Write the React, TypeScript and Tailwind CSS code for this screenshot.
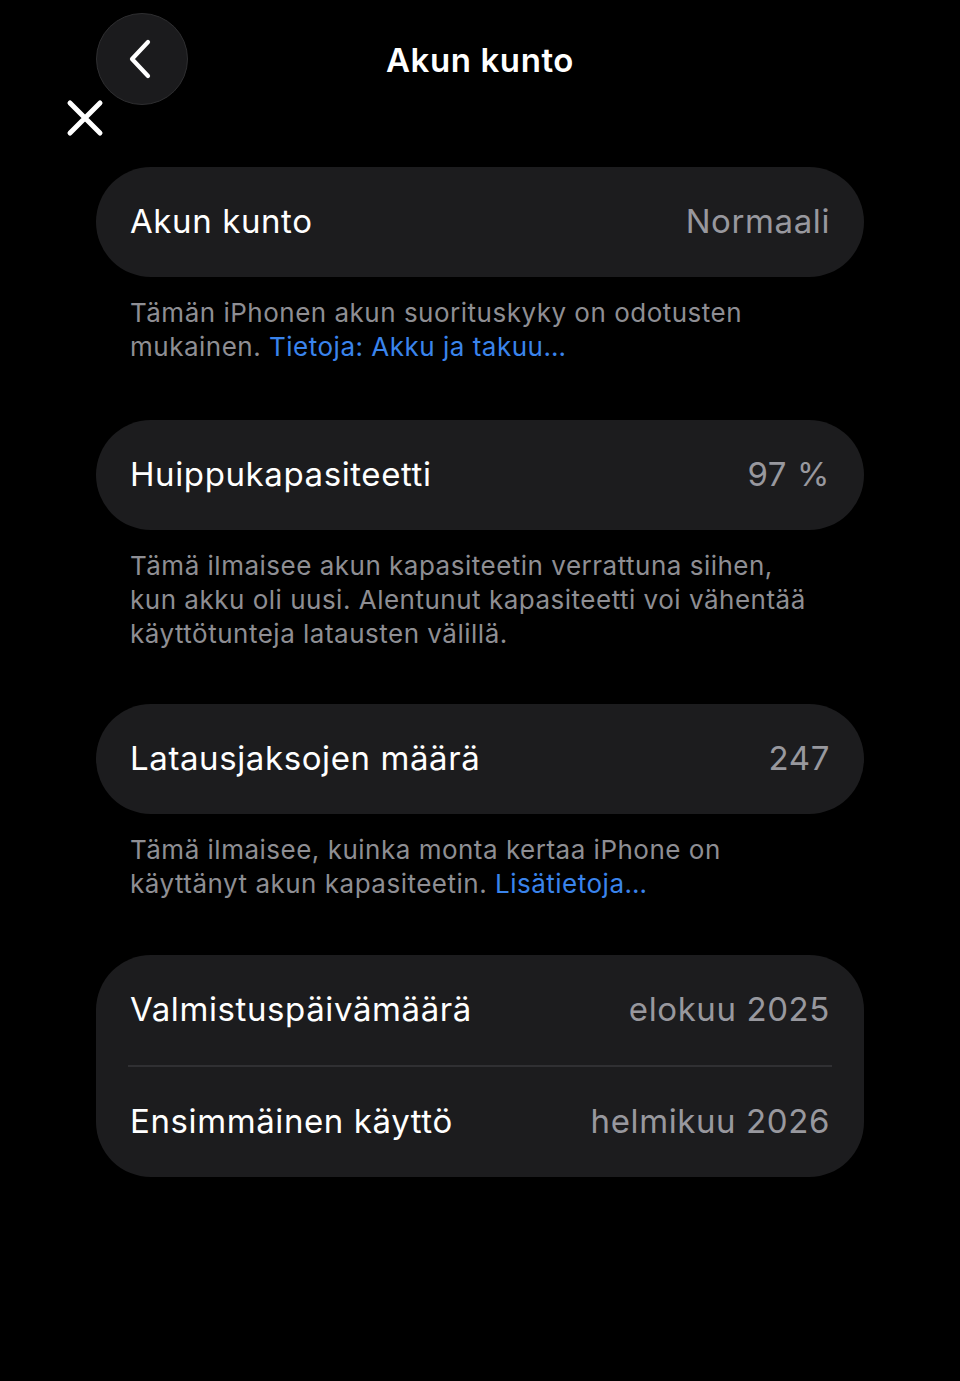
import React from "react";

const font = { fontFamily: "Inter, 'Noto Sans', 'Liberation Sans', sans-serif" };

function Row({ label, value }: { label: string; value: string }) {
  return (
    <div className="flex h-[110px] items-center justify-between px-[34px]">
      <span className="text-[33px] text-white tracking-[0.6px]">{label}</span>
      <span className="text-[33px] text-[#98989e] tracking-[0.6px]">{value}</span>
    </div>
  );
}

function Note({ children }: { children: React.ReactNode }) {
  return (
    <p className="pl-[34px] pr-[48px] pt-[19px] text-[26px] leading-[34px] tracking-[0.5px] text-[#8e8e93]">
      {children}
    </p>
  );
}

export default function App() {
  return (
    <div className="min-h-[1381px] w-[960px] bg-black" style={font}>
      {/* top bar */}
      <div className="grid grid-cols-[1fr_auto_1fr] items-center pt-[13px]">
        <div className="pl-[96px]">
          <button className="flex h-[92px] w-[92px] items-center justify-center rounded-full border border-[#2e2e30] bg-[#1b1b1d]">
            <svg width="32" height="42" viewBox="0 0 32 42" fill="none" className="-ml-[4px]">
              <path d="M24 4 L8 21 L24 38" stroke="white" strokeWidth="4.2" strokeLinecap="round" strokeLinejoin="round" />
            </svg>
          </button>
        </div>
        <h1 className="pt-[4px] text-[33px] font-semibold tracking-[0.6px] text-white">Akun kunto</h1>
        <div />
      </div>
      <div className="-mt-[6px] pl-[66px]">
        <svg width="38" height="38" viewBox="0 0 38 38" fill="none">
          <path d="M4 4 L34 34 M34 4 L4 34" stroke="white" strokeWidth="5" strokeLinecap="round" />
        </svg>
      </div>

      <div className="px-[96px] pt-[30px]">
        <div className="rounded-[55px] bg-[#1c1c1e]">
          <Row label="Akun kunto" value="Normaali" />
        </div>
        <Note>
          Tämän iPhonen akun suorituskyky on odotusten mukainen.{" "}
          <span className="text-[#3a84ec]">Tietoja: Akku ja takuu…</span>
        </Note>

        <div className="mt-[56px] rounded-[55px] bg-[#1c1c1e]">
          <Row label="Huippukapasiteetti" value="97 %" />
        </div>
        <Note>
          Tämä ilmaisee akun kapasiteetin verrattuna siihen, kun akku oli uusi. Alentunut kapasiteetti voi vähentää käyttötunteja latausten välillä.
        </Note>

        <div className="mt-[53px] rounded-[55px] bg-[#1c1c1e]">
          <Row label="Latausjaksojen määrä" value="247" />
        </div>
        <Note>
          Tämä ilmaisee, kuinka monta kertaa iPhone on käyttänyt akun kapasiteetin.{" "}
          <span className="text-[#3a84ec]">Lisätietoja…</span>
        </Note>

        <div className="mt-[54px] rounded-[55px] bg-[#1c1c1e]">
          <Row label="Valmistuspäivämäärä" value="elokuu 2025" />
          <div className="mx-[32px] h-[2px] bg-[#303033]" />
          <Row label="Ensimmäinen käyttö" value="helmikuu 2026" />
        </div>
      </div>
    </div>
  );
}
